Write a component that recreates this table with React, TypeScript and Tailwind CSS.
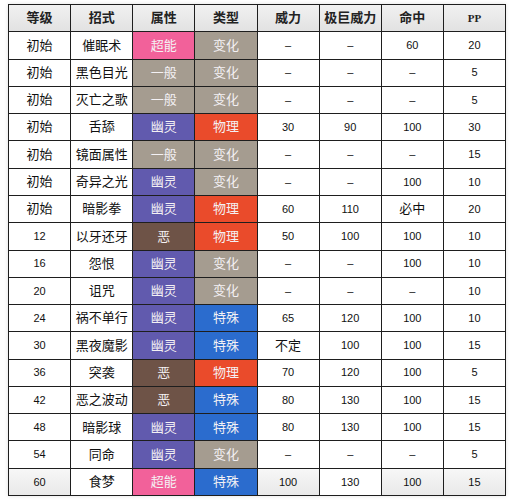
import React from "react";

type Row = [string, string, string, string, string, string, string, string];

const rows: Row[] = [
  ["初始", "催眠术", "超能", "变化", "–", "–", "60", "20"],
  ["初始", "黑色目光", "一般", "变化", "–", "–", "–", "5"],
  ["初始", "灭亡之歌", "一般", "变化", "–", "–", "–", "5"],
  ["初始", "舌舔", "幽灵", "物理", "30", "90", "100", "30"],
  ["初始", "镜面属性", "一般", "变化", "–", "–", "–", "15"],
  ["初始", "奇异之光", "幽灵", "变化", "–", "–", "100", "10"],
  ["初始", "暗影拳", "幽灵", "物理", "60", "110", "必中", "20"],
  ["12", "以牙还牙", "恶", "物理", "50", "100", "100", "10"],
  ["16", "怨恨", "幽灵", "变化", "–", "–", "100", "10"],
  ["20", "诅咒", "幽灵", "变化", "–", "–", "–", "10"],
  ["24", "祸不单行", "幽灵", "特殊", "65", "120", "100", "10"],
  ["30", "黑夜魔影", "幽灵", "特殊", "不定", "100", "100", "15"],
  ["36", "突袭", "恶", "物理", "70", "120", "100", "5"],
  ["42", "恶之波动", "恶", "特殊", "80", "130", "100", "15"],
  ["48", "暗影球", "幽灵", "特殊", "80", "130", "100", "15"],
  ["54", "同命", "幽灵", "变化", "–", "–", "–", "5"],
  ["60", "食梦", "超能", "特殊", "100", "130", "100", "15"],
];

const typeBg: Record<string, string> = {
  超能: "bg-[#f2619a]",
  一般: "bg-[#a59c90]",
  幽灵: "bg-[#615aae]",
  恶: "bg-[#6e5347]",
  变化: "bg-[#a59c90]",
  物理: "bg-[#ea4b2b]",
  特殊: "bg-[#2b6cce]",
};

const headers = ["等级", "招式", "属性", "类型", "威力", "极巨威力", "命中", "PP"];

export default function App() {
  return (
    <div className="w-[513px] h-[500px] bg-white pt-[4px] pl-[8px]" style={{ fontFamily: '"Liberation Sans", "Noto Sans CJK SC", sans-serif' }}>
      <div className="w-[498px] h-[492px] bg-[#1e1e1e] p-px grid grid-cols-8 grid-rows-[repeat(18,1fr)] gap-px shadow-[0_0_4px_rgba(0,0,0,0.12)]">
        {headers.map((h) => (
          <div
            key={h}
            className={`flex items-center justify-center bg-gradient-to-b from-[#f1f1f1] to-[#e2e2e2] text-[#222] font-bold ${h === "PP" ? "text-[11px] font-['Liberation_Serif',serif]" : "text-[13px]"}`}
          >
            {h}
          </div>
        ))}
        {rows.map((r, ri) => {
          const last = ri === rows.length - 1;
          return r.map((c, ci) => {
            if (ci === 2 || ci === 3) {
              return (
                <div key={`${ri}-${ci}`} className={`flex items-center justify-center text-[13px] text-[#f4f1f4] ${typeBg[c]}`}>
                  {c}
                </div>
              );
            }
            const isCn = /[\u4e00-\u9fff]/.test(c);
            const grayLast = last && ci !== 1 && ci !== 5;
            return (
              <div
                key={`${ri}-${ci}`}
                className={`flex items-center justify-center text-[#111] ${isCn ? "text-[13px]" : "text-[11px]"} ${grayLast ? "bg-gradient-to-b from-[#f7f7f7] to-[#e9e9e9]" : "bg-white"}`}
              >
                {c}
              </div>
            );
          });
        })}
      </div>
    </div>
  );
}
